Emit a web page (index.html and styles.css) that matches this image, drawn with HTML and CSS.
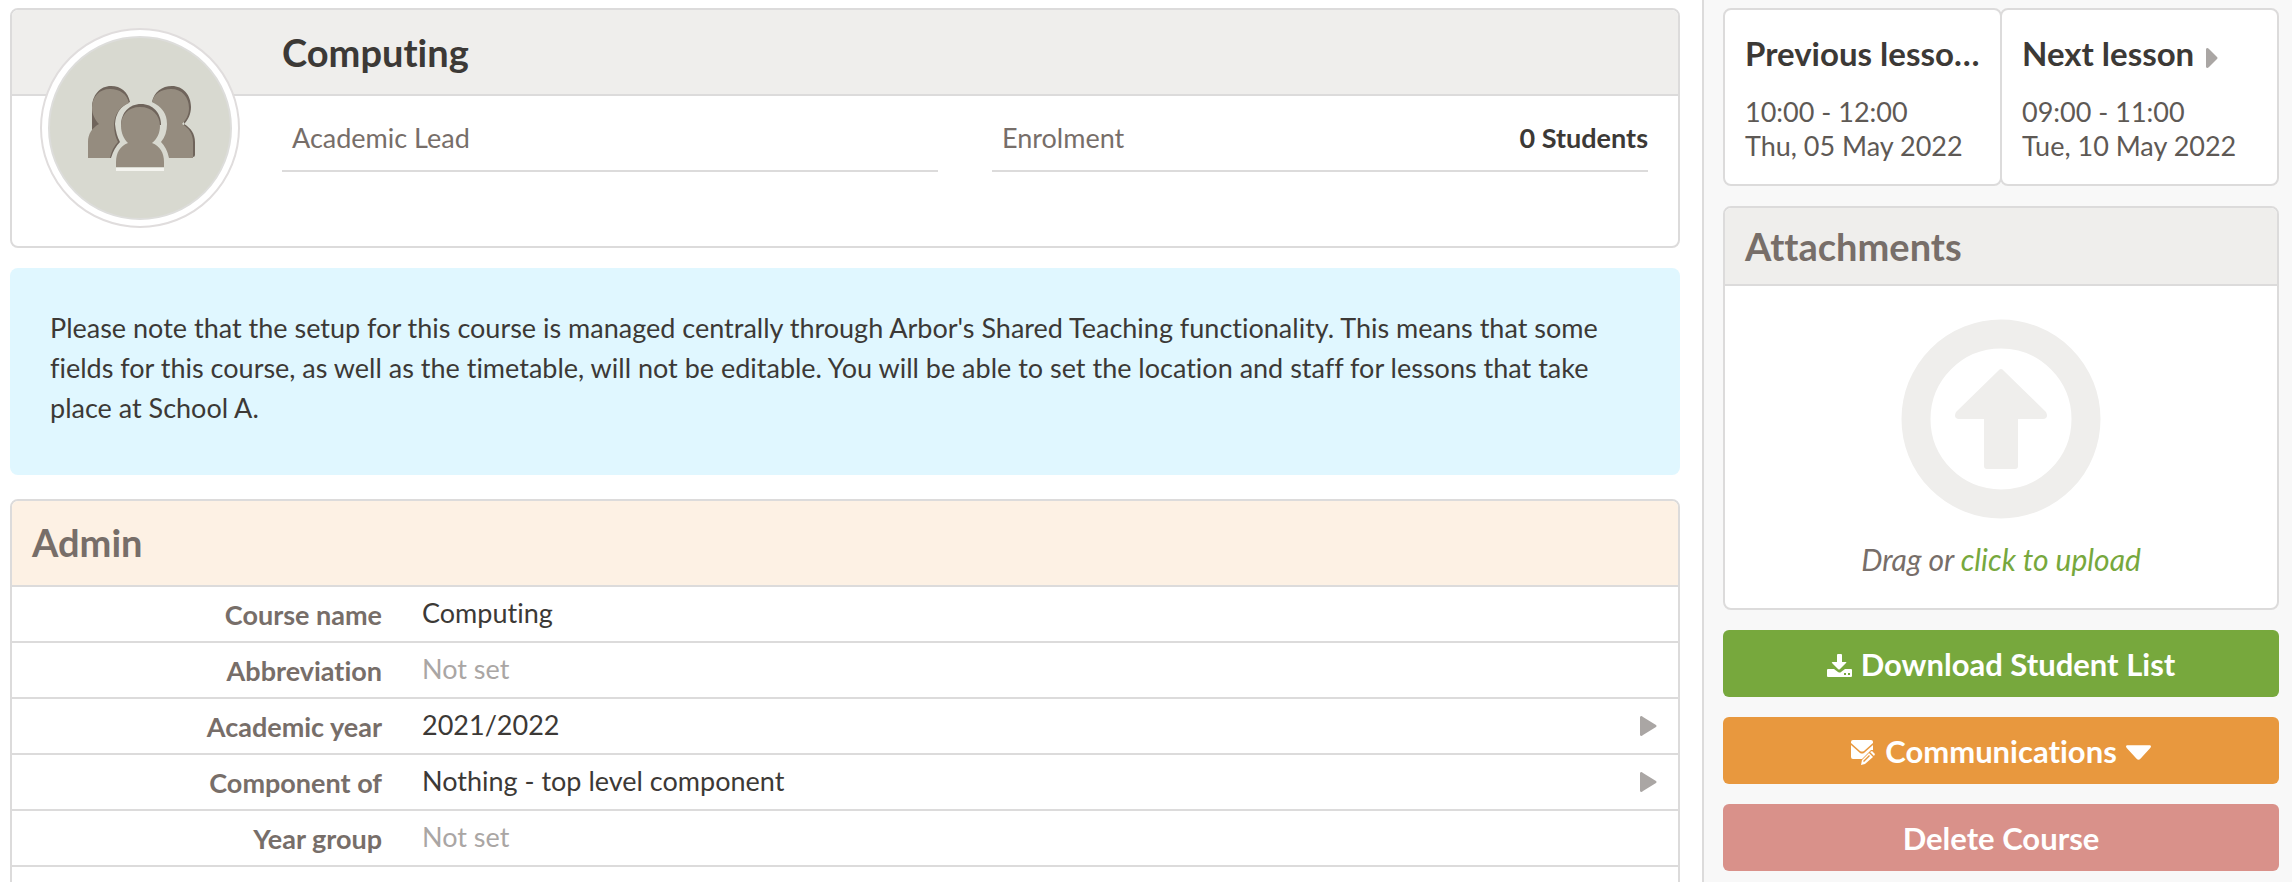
FILE: index.html
```html
<!DOCTYPE html>
<html lang="en">
<head>
    <meta charset="UTF-8">
    <meta name="viewport" content="width=device-width, initial-scale=1.0">
    <title>Computing</title>
    <link rel="stylesheet" href="styles.css">
</head>
<body>
    <div class="page">
        <main class="main">
            <section class="card profile">
                <div class="avatar">
                    <svg viewBox="0 0 184 184" aria-hidden="true">
                        <circle cx="92" cy="92" r="91" fill="#d8d9d0" stroke="#dddddb" stroke-width="2"/>
                        <!-- back row -->
                        <path fill="#6f645b" d="M63 50c10 0 17 6 19 16Q68 72 67 88q1 11 5 18-6 6-9 16H44V72c0-13 8-22 19-22z"/>
                        <path fill="#958c7f" d="M62 53c10 0 17 5 19 14Q67 73 66 88q0 11 4 18-6 6-8 16H40v-16c0-8 4-14 11-18-4-4-7-10-7-16 0-11 7-19 18-19z"/>
                        <path fill="#6f645b" d="M124 50c11 0 19 9 19 21 0 7-3 13-7 17 7 4 11 10 11 18v13q0 2-2 2h-9V71l-32-5c2-10 10-16 20-16z"/>
                        <path fill="#958c7f" d="M123 53c11 0 18 8 18 19 0 7-3 12-7 16 7 4 11 10 11 18v16h-24q-2-10-8-16 6-7 6-18 0-15-15-22c2-8 9-13 19-13z"/>
                        <!-- front person -->
                        <path fill="#f4f4ef" d="M68 132h48v3H68z"/>
                        <path fill="#6f645b" d="M93 68c-12 0-20 9-20 21h40c0-12-8-21-20-21z"/>
                        <path fill="#958c7f" d="M92 71c-12 0-19 8-19 19 0 7 3 13 7 17-8 3-12 10-12 19v5h48v-5c0-9-4-16-12-19 5-4 8-10 8-17 0-11-8-19-20-19z"/>
                    </svg>
                </div>
                <header class="profile-header">
                    <h1>Computing</h1>
                </header>
                <div class="profile-fields">
                    <div class="field"><span>Academic Lead</span></div>
                    <div class="field"><span>Enrolment</span><strong>0 Students</strong></div>
                </div>
            </section>

            <p class="notice">Please note that the setup for this course is managed centrally through Arbor's Shared Teaching functionality. This means that some fields for this course, as well as the timetable, will not be editable. You will be able to set the location and staff for lessons that take place at School A.</p>

            <section class="card admin">
                <h2 class="admin-title">Admin</h2>
                <table class="details">
                    <tr><th scope="row">Course name</th><td>Computing</td><td class="arrow"></td></tr>
                    <tr><th scope="row">Abbreviation</th><td class="empty">Not set</td><td class="arrow"></td></tr>
                    <tr><th scope="row">Academic year</th><td>2021/2022</td><td class="arrow"><svg width="17" height="20" viewBox="0 0 17 20"><path d="M0 1Q1-1 3 1L16 9Q17 10 16 11L3 19Q1 21 0 19z"/></svg></td></tr>
                    <tr><th scope="row">Component of</th><td>Nothing - top level component</td><td class="arrow"><svg width="17" height="20" viewBox="0 0 17 20"><path d="M0 1Q1-1 3 1L16 9Q17 10 16 11L3 19Q1 21 0 19z"/></svg></td></tr>
                    <tr><th scope="row">Year group</th><td class="empty">Not set</td><td class="arrow"></td></tr>
                    <tr><th></th><td></td><td class="arrow"></td></tr>
                </table>
            </section>
        </main>

        <aside class="sidebar">
            <nav class="lessons">
                <a href="#" class="card lesson">
                    <h3>Previous lesson <svg width="12" height="20" viewBox="0 0 12 20"><path d="M0 1Q1-1 3 1L11 9Q12 10 11 11L3 19Q1 21 0 19z"/></svg></h3>
                    <p>10:00 - 12:00<br>Thu, 05 May 2022</p>
                </a>
                <a href="#" class="card lesson">
                    <h3>Next lesson <svg width="12" height="20" viewBox="0 0 12 20"><path d="M0 1Q1-1 3 1L11 9Q12 10 11 11L3 19Q1 21 0 19z"/></svg></h3>
                    <p>09:00 - 11:00<br>Tue, 10 May 2022</p>
                </a>
            </nav>

            <section class="card attachments">
                <h2>Attachments</h2>
                <div class="dropzone">
                    <svg width="200" height="200" viewBox="0 0 200 200" aria-hidden="true">
                        <circle cx="100" cy="100" r="85" fill="none" stroke="#efeeec" stroke-width="29"/>
                        <path fill="#efeeec" d="M97 52Q100 48 103 52L145 93Q147 97 145 99 144 100 142 100H117V147Q117 150 114 150H86Q83 150 83 147V100H58Q56 100 55 99 53 97 55 93z"/>
                    </svg>
                    <p>Drag or <a href="#">click to upload</a></p>
                </div>
            </section>

            <button type="button" class="btn green">
                <svg width="25" height="23" viewBox="0 0 25 23" aria-hidden="true">
                    <path d="M10 1q0-1 1-1h3q1 0 1 1v7h4q1 0 0 1l-6 6q-1 1-2 0L5 9Q4 8 6 8h4z"/>
                    <path fill-rule="evenodd" d="M1 15h6l4 3q2 1 3 0l4-3h6q1 0 1 1v6q0 1-1 1H1q-1 0-1-1v-6q0-1 1-1zm16 4v2h2v-2zm4 0v2h2v-2z"/>
                </svg>
                Download Student List
            </button>
            <button type="button" class="btn orange">
                <svg width="25" height="26" viewBox="0 0 25 26" aria-hidden="true">
                    <path d="M2 0h18q2 0 2 2v1l-9 8q-2 1-4 0L0 3V2q0-2 2-2z"/>
                    <path d="M0 5l9 8q2 1 4 0l9-8v5l-2 0-9 9H2q-2 0-2-2z"/>
                    <path fill-rule="evenodd" d="M18 13l4 4-8 7-4 1 1-5zm0 2l-6 6 1 1 6-6zM19 12l2-1 3 3-1 2z"/>
                </svg>
                Communications
                <svg width="25" height="15" viewBox="0 0 26 15" aria-hidden="true"><path d="M1 0h24q2 1 0 3L15 14q-2 2-4 0L1 3q-2-2 0-3z"/></svg>
            </button>
            <button type="button" class="btn red">Delete Course</button>
        </aside>
    </div>
</body>
</html>
```
FILE: styles.css
```css
* {
    box-sizing: border-box;
}

body {
    margin: 0;
    background: #fff;
    color: #3c3936;
    font-family: Lato, sans-serif;
    font-size: 27px;
    font-variant-ligatures: none;
}

h1, h2, h3, p {
    margin: 0;
}

a {
    color: inherit;
    text-decoration: none;
}

.page {
    display: flex;
    height: 100vh;
    overflow: hidden;
}

.main {
    flex: 1;
    min-width: 0;
    padding: 8px 22px 0 10px;
}

.card {
    background: #fff;
    border: 2px solid #dcdbdb;
    border-radius: 8px;
    overflow: hidden;
}

/* Course header */
.profile {
    position: relative;
    height: 240px;
    margin-bottom: 20px;
}

.avatar {
    position: absolute;
    top: 18px;
    left: 28px;
    width: 200px;
    height: 200px;
    padding: 6px;
    background: #fff;
    border: 2px solid #e0dddd;
    border-radius: 50%;
}

.avatar svg {
    display: block;
}

.profile-header {
    padding: 17px 30px 17px 270px;
    background: #efeeec;
    border-bottom: 2px solid #dcdbdb;
}

h1 {
    font-size: 38px;
    line-height: 50px;
}

.profile-fields {
    display: grid;
    grid-template-columns: 1fr 1fr;
    gap: 54px;
    padding: 20px 30px 0 270px;
}

.field {
    display: flex;
    justify-content: space-between;
    padding: 4px 0 14px 10px;
    border-bottom: 2px solid #dcdbdb;
    line-height: 36px;
}

.field span {
    color: #776e69;
}

.notice {
    margin-bottom: 24px;
    padding: 40px 40px 47px;
    background: #e0f7ff;
    border-radius: 8px;
    line-height: 40px;
}

/* Admin table */
.admin-title {
    padding: 18px 20px 20px;
    background: #fdf1e4;
    border-bottom: 2px solid #dcdbdb;
    color: #776e69;
    font-size: 38px;
    line-height: 46px;
}

.details {
    width: 100%;
    border-spacing: 0;
}

.details th,
.details td {
    height: 56px;
    padding: 0 0 4px;
    border-bottom: 2px solid #dcdbdb;
}

.details th {
    width: 370px;
    padding-bottom: 0;
    color: #776e69;
    text-align: right;
}

.details td {
    padding-left: 40px;
}

.details .empty {
    color: #aaa6a4;
}

.details .arrow {
    width: 80px;
    padding: 0 21px 0 0;
}

.arrow svg {
    display: block;
    margin-left: auto;
    fill: #aaa6a4;
}

/* Sidebar */
.sidebar {
    display: flex;
    flex-direction: column;
    gap: 20px;
    width: 590px;
    padding: 8px 13px 0 19px;
    background: #f8f8f8;
    border-left: 2px solid #dcdbdb;
}

.lessons {
    display: flex;
}

.lesson {
    flex: 1;
    min-width: 0;
    padding: 22px 20px 21px;
}

.lesson + .lesson {
    margin-left: -2px;
}

.lesson h3 {
    margin-bottom: 21px;
    overflow: hidden;
    font-size: 33px;
    line-height: 42px;
    text-overflow: ellipsis;
    white-space: nowrap;
}

.lesson svg {
    margin-left: 4px;
    vertical-align: -2px;
    fill: #aaa6a4;
}

.lesson p {
    color: #5e5955;
    line-height: 34px;
}

.attachments h2 {
    padding: 15px 20px 15px;
    background: #efeeec;
    border-bottom: 2px solid #dcdbdb;
    color: #776e69;
    font-size: 38px;
    line-height: 46px;
}

.dropzone {
    padding: 33px 20px 28px;
    text-align: center;
}

.dropzone svg {
    display: block;
    margin: 0 auto 20px;
}

.dropzone p {
    color: #776e69;
    font-size: 30px;
    font-style: italic;
    line-height: 41px;
}

.dropzone a {
    color: #77a83d;
}

.btn {
    display: flex;
    align-items: center;
    justify-content: center;
    gap: 9px;
    height: 67px;
    border: 0;
    border-radius: 6px;
    color: #fff;
    font-family: inherit;
    font-size: 31px;
    font-variant-ligatures: none;
    font-weight: bold;
    cursor: pointer;
}

.btn svg {
    margin-top: 4px;
    fill: #fff;
}

.green {
    background: #77a83d;
}

.orange {
    background: #e8983e;
}

.red {
    background: #d9918a;
}
```
